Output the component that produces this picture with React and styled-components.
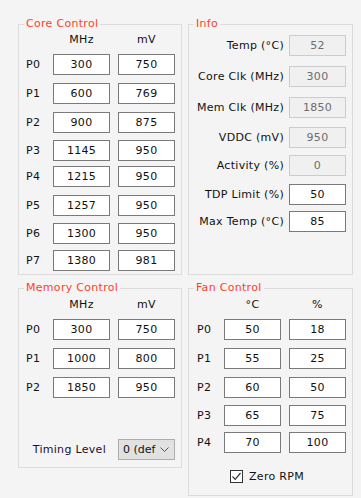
import React from "react";
import styled, { createGlobalStyle } from "styled-components";

const GlobalStyle = createGlobalStyle`
  body {
    margin: 0;
    background: #f4f4f4;
    font-family: "DejaVu Sans", Verdana, sans-serif;
    font-size: 11px;
    letter-spacing: 0.3px;
    color: #111;
  }
`;

const coreStates = [
  { p: "P0", mhz: 300, mv: 750, mt: 7 },
  { p: "P1", mhz: 600, mv: 769, mt: 8 },
  { p: "P2", mhz: 900, mv: 875, mt: 8 },
  { p: "P3", mhz: 1145, mv: 950, mt: 7 },
  { p: "P4", mhz: 1215, mv: 950, mt: 5 },
  { p: "P5", mhz: 1257, mv: 950, mt: 8 },
  { p: "P6", mhz: 1300, mv: 950, mt: 7 },
  { p: "P7", mhz: 1380, mv: 981, mt: 6 },
];

const memStates = [
  { p: "P0", mhz: 300, mv: 750, mt: 7 },
  { p: "P1", mhz: 1000, mv: 800, mt: 8 },
  { p: "P2", mhz: 1850, mv: 950, mt: 8 },
];

const fanStates = [
  { p: "P0", t: 50, pct: 18, mt: 7 },
  { p: "P1", t: 55, pct: 25, mt: 8 },
  { p: "P2", t: 60, pct: 50, mt: 8 },
  { p: "P3", t: 65, pct: 75, mt: 7 },
  { p: "P4", t: 70, pct: 100, mt: 6 },
];

const infoRows = [
  { label: "Temp (°C)", value: 52, ro: true, mt: 0 },
  { label: "Core Clk (MHz)", value: 300, ro: true, mt: 10 },
  { label: "Mem Clk (MHz)", value: 1850, ro: true, mt: 10 },
  { label: "VDDC (mV)", value: 950, ro: true, mt: 9 },
  { label: "Activity (%)", value: 0, ro: true, mt: 7 },
  { label: "TDP Limit (%)", value: 50, ro: false, mt: 8 },
  { label: "Max Temp (°C)", value: 85, ro: false, mt: 6 },
];

const App = () => {
  return (
    <>
      <GlobalStyle />
      <Page>
        <Column>
          <Group $h={251} $pad="8px 6px 0 7px">
            <Legend>Core Control</Legend>
            <StateRow $mt={0} $head>
              <span />
              <HeadCell>MHz</HeadCell>
              <HeadCell>mV</HeadCell>
            </StateRow>
            {coreStates.map((s) => (
              <StateRow key={s.p} $mt={s.mt}>
                <RowLabel>{s.p}</RowLabel>
                <Field defaultValue={s.mhz} />
                <Field defaultValue={s.mv} />
              </StateRow>
            ))}
          </Group>

          <Group $h={180} $pad="9px 6px 0 7px">
            <Legend>Memory Control</Legend>
            <StateRow $mt={0} $head>
              <span />
              <HeadCell>MHz</HeadCell>
              <HeadCell>mV</HeadCell>
            </StateRow>
            {memStates.map((s) => (
              <StateRow key={s.p} $mt={s.mt}>
                <RowLabel>{s.p}</RowLabel>
                <Field defaultValue={s.mhz} />
                <Field defaultValue={s.mv} />
              </StateRow>
            ))}
            <TimingRow>
              <TimingLabel>Timing Level</TimingLabel>
              <Combo>
                <ComboText>0 (def</ComboText>
                <svg width="9" height="5" viewBox="0 0 9 5">
                  <path d="M0.5 0.5 L4.5 4.5 L8.5 0.5" fill="none" stroke="#555" strokeWidth="1" />
                </svg>
              </Combo>
            </TimingRow>
          </Group>
        </Column>

        <Column>
          <Group $h={251} $pad="10px 6px 0 6px">
            <Legend>Info</Legend>
            {infoRows.map((r) => (
              <InfoRow key={r.label} $mt={r.mt}>
                <InfoLabel>{r.label}</InfoLabel>
                <Field $ro={r.ro} readOnly={r.ro} defaultValue={r.value} />
              </InfoRow>
            ))}
          </Group>

          <Group $h={208} $pad="9px 6px 0 8px">
            <Legend>Fan Control</Legend>
            <StateRow $mt={0} $head>
              <span />
              <HeadCell>°C</HeadCell>
              <HeadCell>%</HeadCell>
            </StateRow>
            {fanStates.map((s) => (
              <StateRow key={s.p} $mt={s.mt}>
                <RowLabel>{s.p}</RowLabel>
                <Field defaultValue={s.t} />
                <Field defaultValue={s.pct} />
              </StateRow>
            ))}
            <CheckRow>
              <CheckBox>
                <svg width="11" height="11" viewBox="0 0 11 11">
                  <path d="M1.5 5.5 L4.2 8.3 L9.5 2" fill="none" stroke="#333" strokeWidth="1.2" />
                </svg>
              </CheckBox>
              <span>Zero RPM</span>
            </CheckRow>
          </Group>
        </Column>
      </Page>
    </>
  );
};

const Page = styled.div`
  display: grid;
  grid-template-columns: 164px 165px;
  column-gap: 6px;
  align-items: start;
  padding: 24px 0 0 18px;
  width: 361px;
  height: 498px;
  box-sizing: border-box;
  overflow: hidden;
`;

const Column = styled.div`
  display: flex;
  flex-direction: column;
  gap: 13px;
`;

const Group = styled.div`
  position: relative;
  box-sizing: border-box;
  height: ${(p) => p.$h}px;
  border: 1px solid #dcdcdc;
  padding: ${(p) => p.$pad};
  display: flex;
  flex-direction: column;
`;

const Legend = styled.span`
  position: absolute;
  top: -8px;
  left: 5px;
  padding: 0 2px;
  background: #f4f4f4;
  color: #ff3f1f;
  line-height: 14px;
`;

const StateRow = styled.div`
  display: grid;
  grid-template-columns: 19px 57px 57px;
  column-gap: 8px;
  align-items: center;
  height: ${(p) => (p.$head ? 14 : 21)}px;
  margin-top: ${(p) => p.$mt}px;
`;

const HeadCell = styled.span`
  text-align: center;
  line-height: 14px;
`;

const RowLabel = styled.span`
  line-height: 14px;
`;

const Field = styled.input`
  box-sizing: border-box;
  width: 57px;
  height: 21px;
  margin: 0;
  padding: 0;
  border: 1px solid ${(p) => (p.$ro ? "#cccccc" : "#7a7a7a")};
  background: ${(p) => (p.$ro ? "#f0f0f0" : "#ffffff")};
  color: ${(p) => (p.$ro ? "#6d6d6d" : "#111")};
  font: inherit;
  letter-spacing: inherit;
  text-align: center;
  outline: none;
`;

const InfoRow = styled.div`
  display: flex;
  align-items: center;
  justify-content: flex-end;
  gap: 5px;
  height: 21px;
  margin-top: ${(p) => p.$mt}px;
`;

const InfoLabel = styled.span`
  white-space: nowrap;
`;

const TimingRow = styled.div`
  display: flex;
  align-items: center;
  justify-content: flex-end;
  gap: 12px;
  height: 21px;
  margin-top: 41px;
`;

const TimingLabel = styled.span`
  color: #1a1030;
`;

const Combo = styled.div`
  box-sizing: border-box;
  width: 57px;
  height: 21px;
  border: 1px solid #adadad;
  background: #e1e1e1;
  display: flex;
  align-items: center;
  justify-content: space-between;
  padding: 0 5px 0 4px;

  svg {
    flex: none;
  }
`;

const ComboText = styled.span`
  white-space: nowrap;
  letter-spacing: 0;
`;

const CheckRow = styled.div`
  display: flex;
  align-items: center;
  gap: 6px;
  margin: 16px 0 0 33px;
  height: 14px;
`;

const CheckBox = styled.span`
  box-sizing: border-box;
  width: 13px;
  height: 13px;
  border: 1px solid #333;
  background: #fff;
  display: flex;
  align-items: center;
  justify-content: center;
`;

export default App;
